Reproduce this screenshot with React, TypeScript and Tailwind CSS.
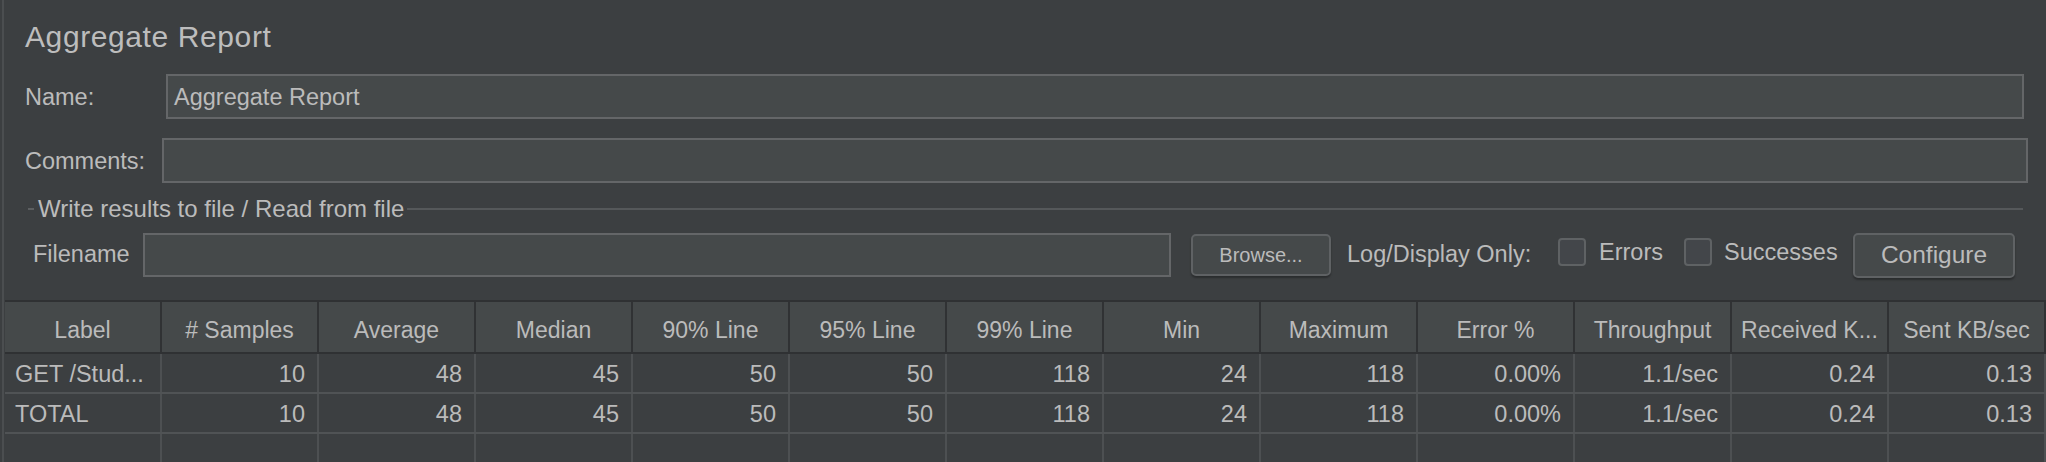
import React from "react"

const font = { fontFamily: '"Liberation Sans", Arial, sans-serif' }

const columns = [
  "Label",
  "# Samples",
  "Average",
  "Median",
  "90% Line",
  "95% Line",
  "99% Line",
  "Min",
  "Maximum",
  "Error %",
  "Throughput",
  "Received K...",
  "Sent KB/sec",
]

const rows = [
  ["GET /Stud...", "10", "48", "45", "50", "50", "118", "24", "118", "0.00%", "1.1/sec", "0.24", "0.13"],
  ["TOTAL", "10", "48", "45", "50", "50", "118", "24", "118", "0.00%", "1.1/sec", "0.24", "0.13"],
  ["", "", "", "", "", "", "", "", "", "", "", "", ""],
]

function Checkbox() {
  return <div className="w-[28px] h-[28px] shrink-0 rounded-[4px] border-2 border-[#5f6264] bg-[#43464a] -mt-[6px]" />
}

export default function App() {
  return (
    <div className="w-[2046px] h-[462px] bg-[#3c3f41] text-[#bbbbbb] overflow-hidden flex" style={font}>
      <div className="ml-[2px] border-l-2 border-[#4b4e50] flex-1 flex flex-col min-w-0">
        {/* 제목 */}
        <div className="shrink-0 mt-[22px] h-[30px] leading-[30px] pl-[21px] text-[30px] tracking-[0.6px] text-[#bdbdbd]">
          Aggregate Report
        </div>

        {/* Name */}
        <div className="shrink-0 mt-[22px] h-[45px] flex items-center pl-[21px] pr-[22px] text-[23.5px]">
          <span className="w-[141px] shrink-0 pt-[2px]">Name:</span>
          <div className="flex-1 h-full border-2 border-[#646668] bg-[#45494a] flex items-center pl-[6px] pt-[2px]">
            Aggregate Report
          </div>
        </div>

        {/* Comments */}
        <div className="shrink-0 mt-[19px] h-[45px] flex items-center pl-[21px] pr-[18px] text-[23.5px]">
          <span className="w-[137px] shrink-0 pt-[2px]">Comments:</span>
          <div className="flex-1 h-full border-2 border-[#646668] bg-[#45494a]" />
        </div>

        {/* 파일 영역 제목 */}
        <div className="shrink-0 mt-[13px] h-[26px] flex items-center pr-[23px] text-[24px]">
          <div className="ml-[24px] w-[6px] h-[2px] bg-[#5c5f61]" />
          <span className="ml-[4px] whitespace-nowrap">Write results to file / Read from file</span>
          <div className="ml-[3px] flex-1 h-[2px] bg-[#55585a]" />
        </div>

        {/* Filename 줄 */}
        <div className="shrink-0 mt-[10px] h-[46px] flex items-center pl-[29px] text-[23.5px]">
          <span className="w-[110px] shrink-0">Filename</span>
          <div className="w-[1028px] h-[44px] shrink-0 border-2 border-[#646668] bg-[#45494a]" />
          <button className="ml-[20px] w-[140px] h-[42px] shrink-0 rounded-[5px] border-2 border-[#5f6264] bg-[#45494a] text-[20px] text-[#bbbbbb] shadow-[0_2px_2px_rgba(0,0,0,0.3)]">
            Browse...
          </button>
          <span className="ml-[16px] w-[211px] shrink-0 whitespace-nowrap">Log/Display Only:</span>
          <Checkbox />
          <span className="ml-[13px] w-[85px] shrink-0 -mt-[4px]">Errors</span>
          <Checkbox />
          <span className="ml-[12px] w-[129px] shrink-0 -mt-[4px]">Successes</span>
          <button className="w-[162px] h-[45px] shrink-0 rounded-[5px] border-2 border-[#5f6264] bg-[#45494a] text-[24.5px] text-[#bbbbbb] shadow-[0_2px_2px_rgba(0,0,0,0.3)]">
            Configure
          </button>
        </div>

        {/* 결과 테이블 */}
        <div className="shrink-0 mt-[22px] ml-px border-t-2 border-[#2f3133]">
          <div className="grid grid-cols-[repeat(13,minmax(0,1fr))] h-[52px] border-b-2 border-[#2f3133]">
            {columns.map((c) => (
              <div
                key={c}
                className="bg-[#45494a] border-r-2 border-[#303234] flex items-center justify-center pt-[7px] text-[23px] whitespace-nowrap overflow-hidden"
              >
                {c}
              </div>
            ))}
          </div>
          {rows.map((r, i) => (
            <div key={i} className="grid grid-cols-[repeat(13,minmax(0,1fr))] h-[40px] border-b-2 border-[#505355]">
              {r.map((v, j) => (
                <div
                  key={j}
                  className={`border-r-2 border-[#4d5052] flex items-center pt-[3px] text-[23.5px] whitespace-nowrap overflow-hidden ${
                    j === 0 ? "justify-start pl-[10px]" : "justify-end pr-[12px]"
                  }`}
                >
                  {v}
                </div>
              ))}
            </div>
          ))}
        </div>
      </div>
    </div>
  )
}
